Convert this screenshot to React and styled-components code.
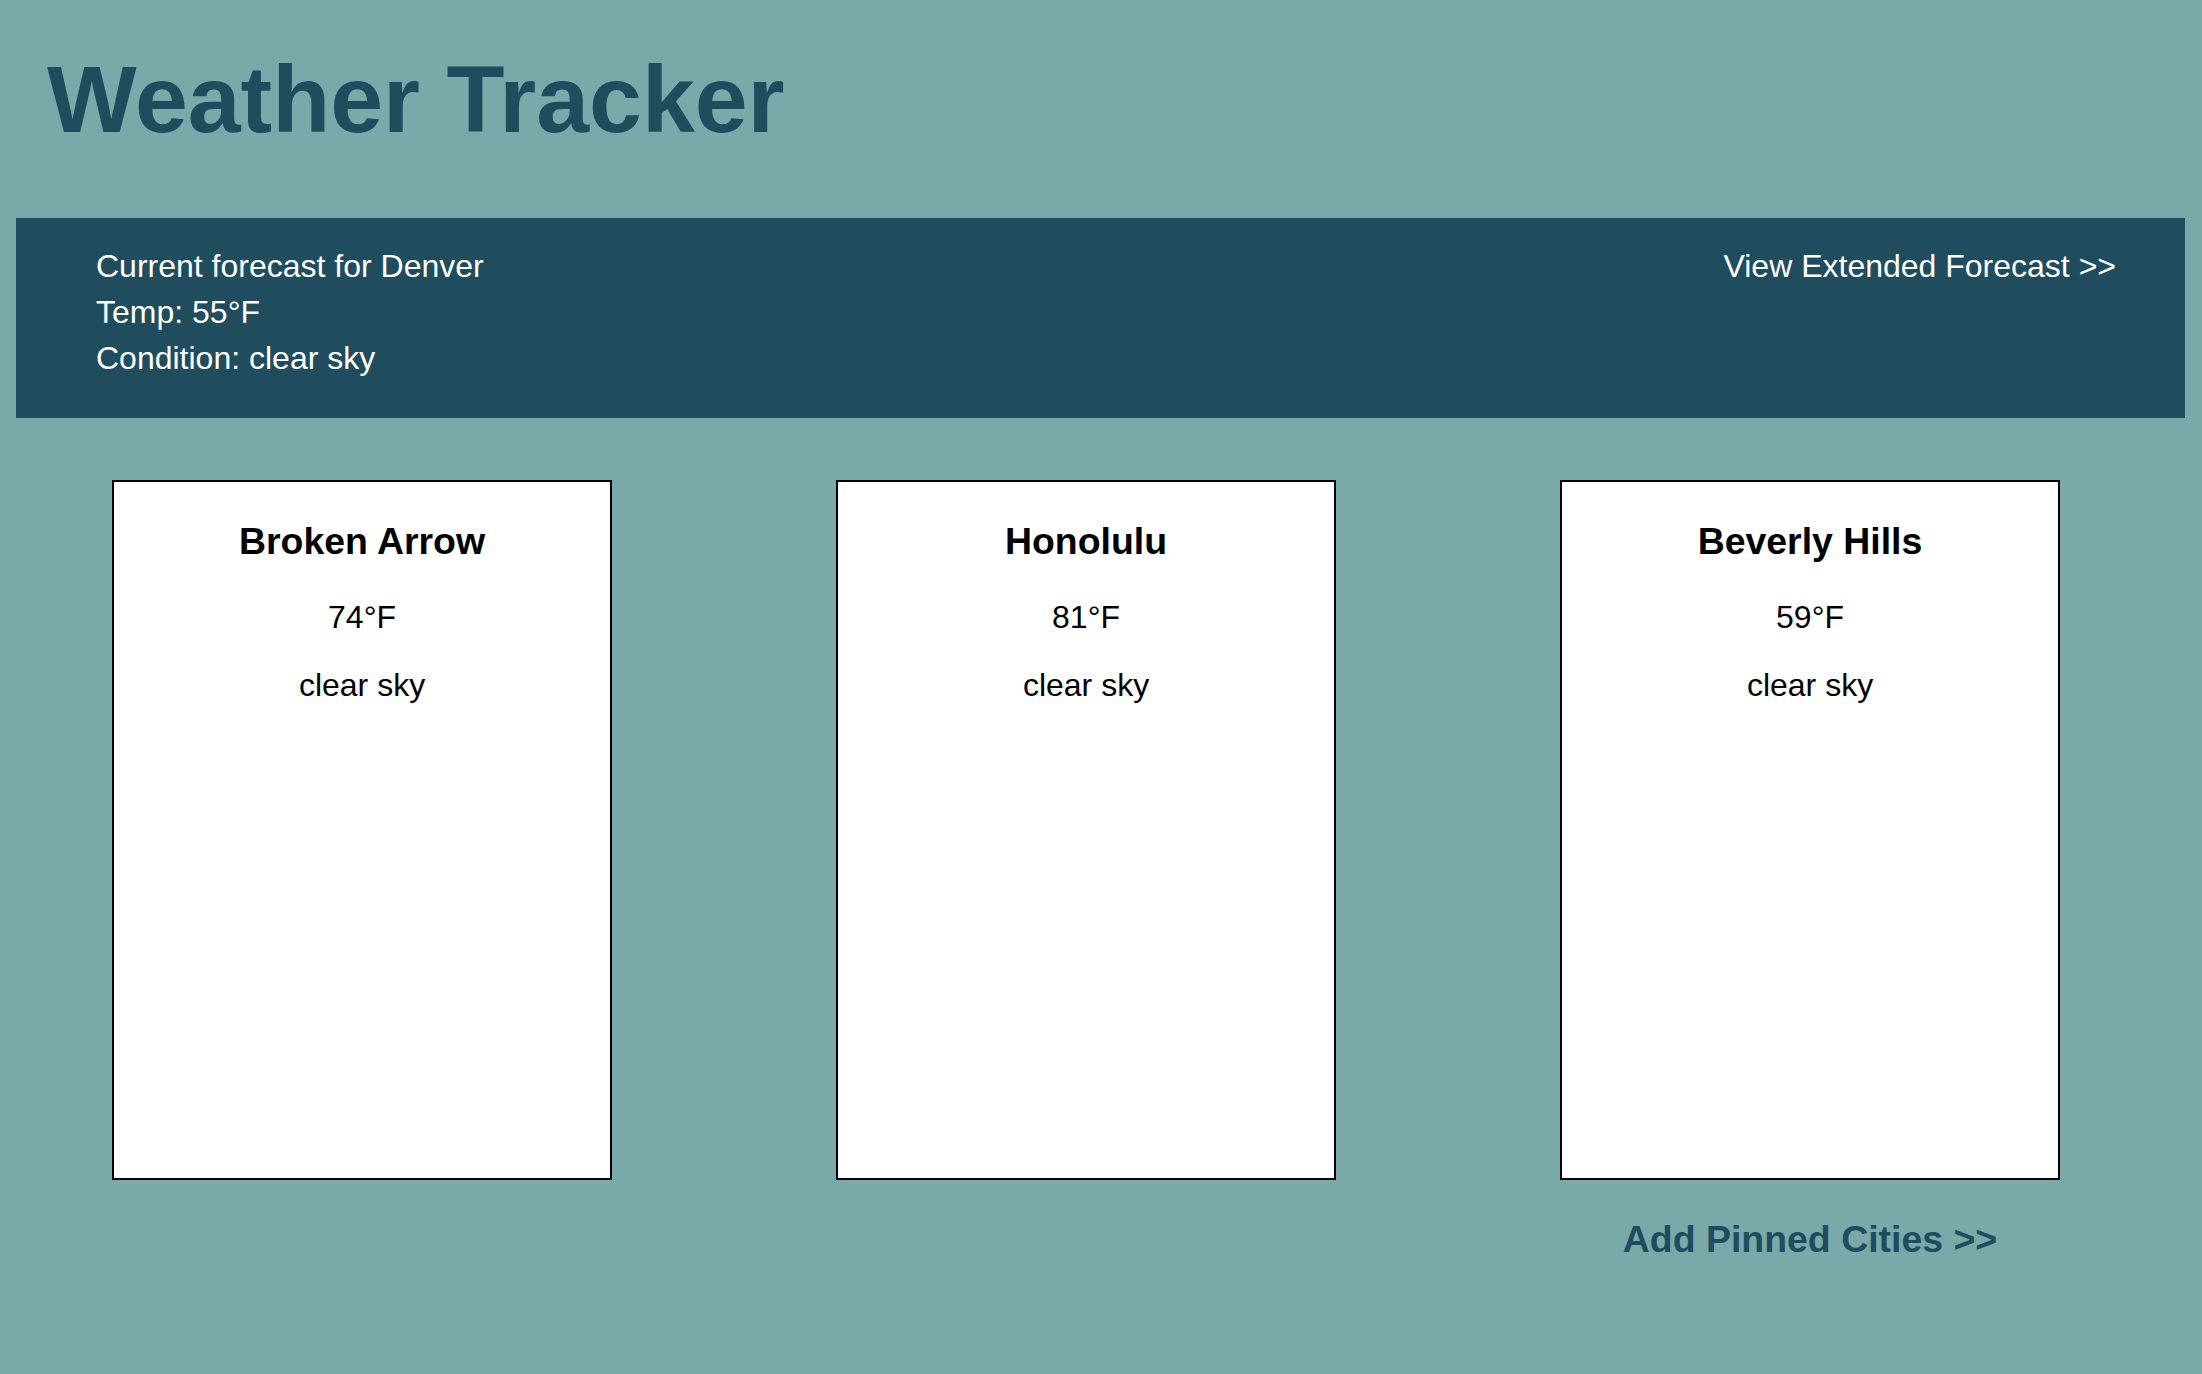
import React from "react";
import styled, { createGlobalStyle } from "styled-components";

const TEAL = "#79a9a9";
const NAVY = "#1f4d5e";

const GlobalStyle = createGlobalStyle`
  html, body {
    margin: 0;
    padding: 0;
    background: ${TEAL};
    font-family: "Liberation Sans", Arial, Helvetica, sans-serif;
  }
  body {
    min-height: 100vh;
  }
`;

const Page = styled.div`
  min-height: 100vh;
  padding-bottom: 40px;
  box-sizing: border-box;
`;

const Title = styled.h1`
  margin: 0;
  padding: 44px 0 0 47px;
  font-size: 95px;
  line-height: 1.16;
  font-weight: bold;
  color: ${NAVY};
`;

const Banner = styled.section`
  margin: 64px 17px 0 16px;
  height: 200px;
  box-sizing: border-box;
  padding: 25px 69px 0 80px;
  background: ${NAVY};
  color: #fff;
  display: flex;
  justify-content: space-between;
  align-items: flex-start;
  font-size: 32px;
  line-height: 46px;
`;

const Current = styled.div`
  display: flex;
  flex-direction: column;
`;

const ExtendedLink = styled.a`
  color: #fff;
  text-decoration: none;
  cursor: pointer;
`;

const Grid = styled.div`
  display: grid;
  grid-template-columns: repeat(3, 500px);
  column-gap: 224px;
  padding-left: 112px;
  margin-top: ${(props) => props.top}px;
`;

const Card = styled.div`
  height: 700px;
  box-sizing: border-box;
  border: 2px solid #000;
  background: #fff;
  padding-top: 37px;
  display: flex;
  flex-direction: column;
  align-items: center;
  color: #000;
`;

const CityName = styled.h3`
  margin: 0;
  font-size: 37.44px;
  line-height: 44px;
  font-weight: bold;
`;

const Detail = styled.p`
  margin: ${(props) => props.gap}px 0 0;
  font-size: 32px;
  line-height: 40px;
`;

const PinLink = styled.a`
  grid-column: 3;
  text-align: center;
  font-size: 37.44px;
  line-height: 44px;
  font-weight: bold;
  color: ${NAVY};
  text-decoration: none;
  cursor: pointer;
`;

const pinned = [
  { id: 1, name: "Broken Arrow", temp: 74, condition: "clear sky" },
  { id: 2, name: "Honolulu", temp: 81, condition: "clear sky" },
  { id: 3, name: "Beverly Hills", temp: 59, condition: "clear sky" },
];

const App = () => {
  return (
    <Page>
      <GlobalStyle />
      <Title>Weather Tracker</Title>
      <Banner>
        <Current>
          <span>Current forecast for Denver</span>
          <span>Temp: 55°F</span>
          <span>Condition: clear sky</span>
        </Current>
        <ExtendedLink>View Extended Forecast &gt;&gt;</ExtendedLink>
      </Banner>
      <Grid top={62}>
        {pinned.map((city) => (
          <Card key={city.id}>
            <CityName>{city.name}</CityName>
            <Detail gap={34}>{city.temp}°F</Detail>
            <Detail gap={28}>{city.condition}</Detail>
          </Card>
        ))}
      </Grid>
      <Grid top={37}>
        <PinLink>Add Pinned Cities &gt;&gt;</PinLink>
      </Grid>
    </Page>
  );
};

export default App;
